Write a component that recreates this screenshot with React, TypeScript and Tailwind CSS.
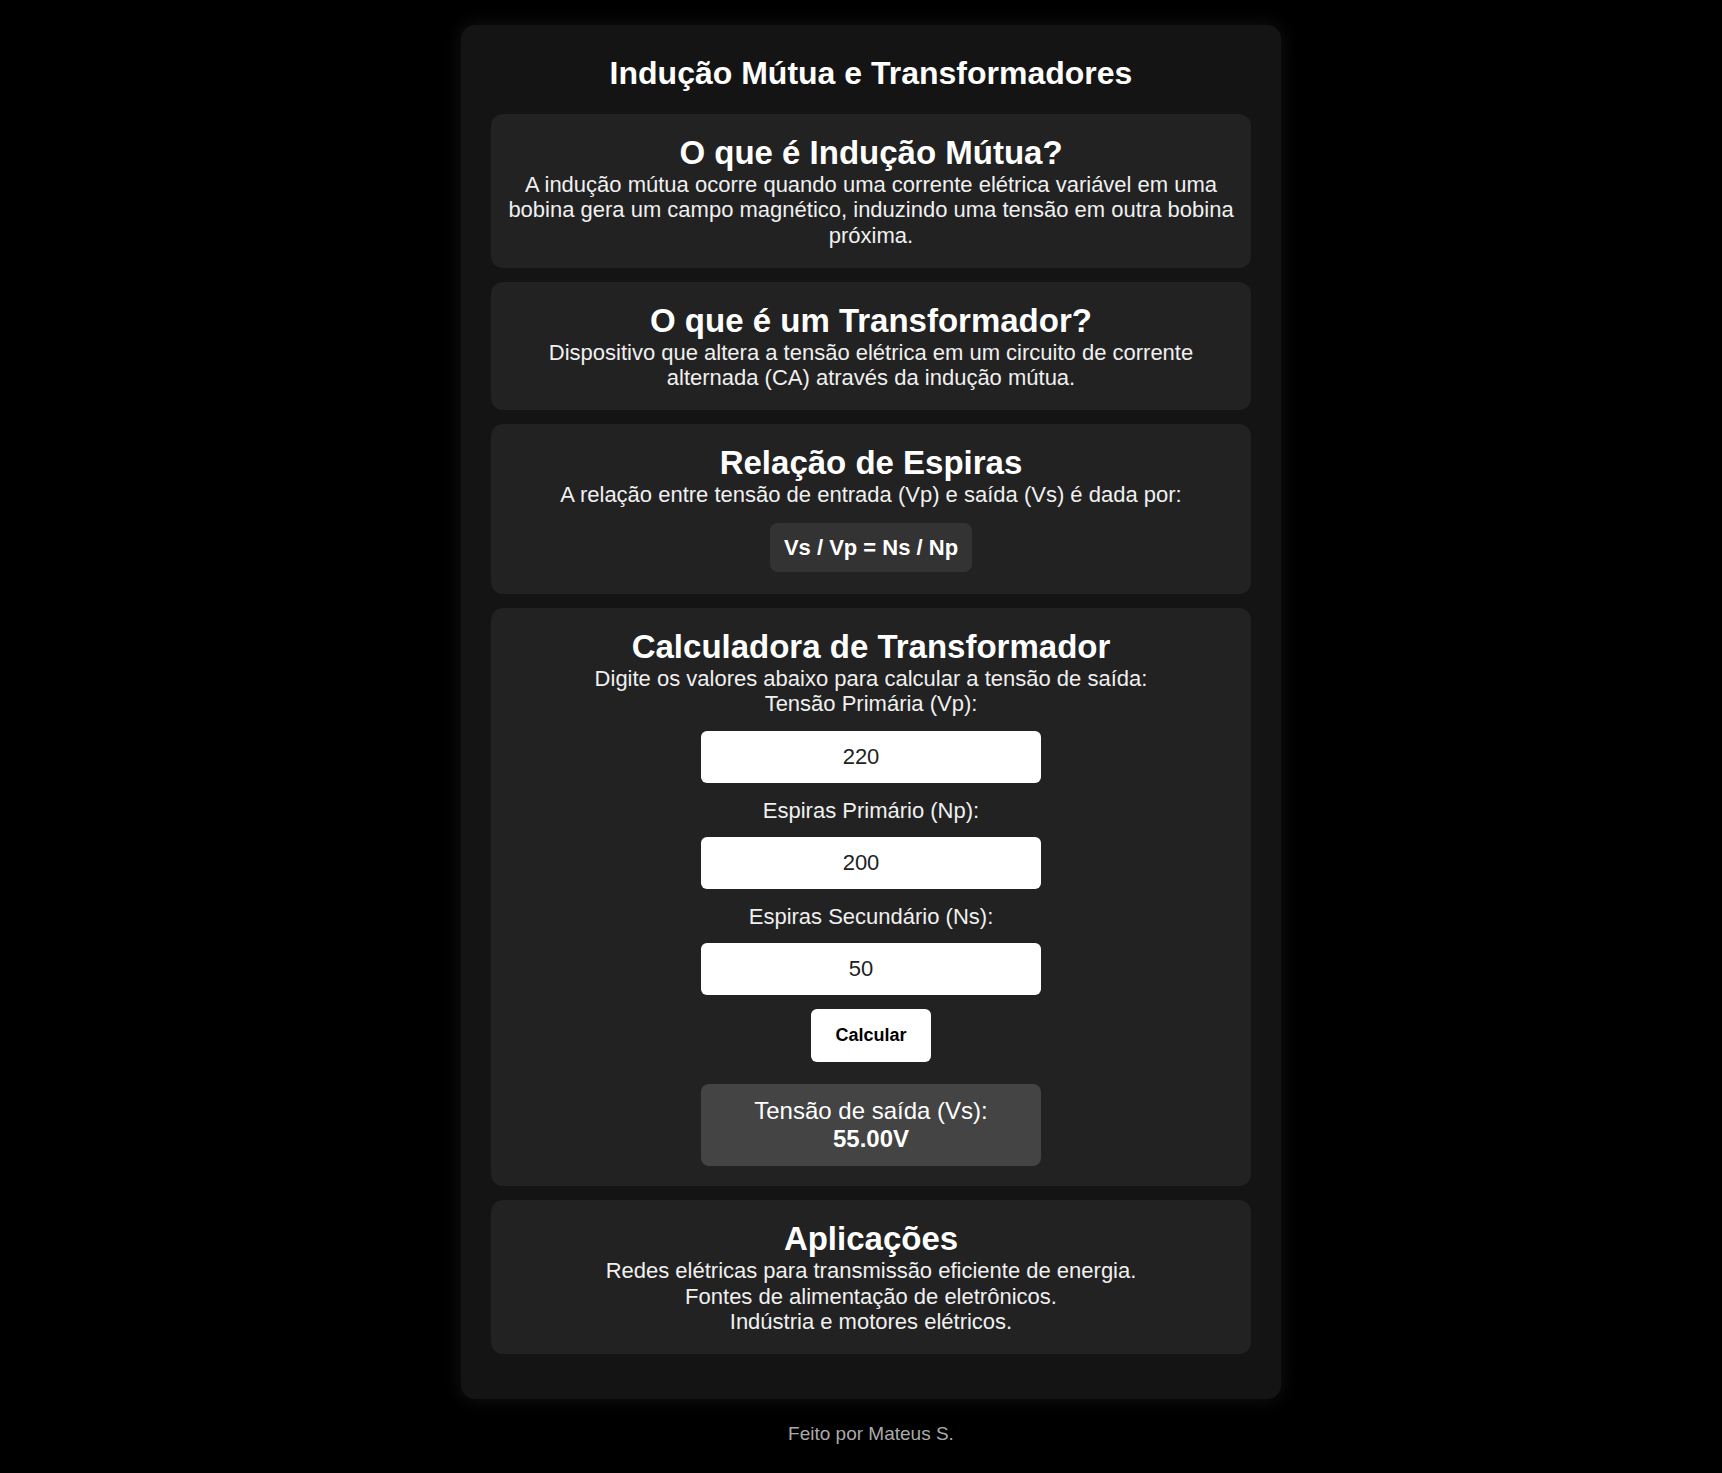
import React from 'react';
import { useState } from "react"

const Card = ({ title, children }: { title: string; children: React.ReactNode }) => {
    return (
        <section className="bg-[#222222] rounded-[12px] px-[16px] py-[20px] mb-[14px]">
            <h2 className="text-[33px] leading-[38px] font-bold text-white">{title}</h2>
            {children}
        </section>
    )
}

const App = () => {
    const [vp, setVp] = useState("220")
    const [np, setNp] = useState("200")
    const [ns, setNs] = useState("50")
    const [vs, setVs] = useState(55)

    const handleCalc = () => {
        const v = parseFloat(vp)
        const p = parseFloat(np)
        const s = parseFloat(ns)
        if (p) setVs((v * s) / p)
    }

    const inputClass =
        "block w-[340px] h-[52px] my-[14px] pr-[5px] rounded-[6px] bg-white text-[#222] text-[22px] text-center outline-none"

    return (
        <div
            className="min-h-screen bg-black pl-[20px] pt-[25px] pb-[20px] text-[#f0f0f0] text-center"
            style={{ fontFamily: '"Liberation Sans", Arial, sans-serif' }}
        >
            <div className="mx-auto w-[820px] rounded-[14px] bg-[#141414] px-[30px] pt-[30px] pb-[31px] shadow-[0_0_20px_rgba(255,255,255,0.08)]">
                <h1 className="text-[32px] leading-[37px] font-bold text-white mb-[22px]">
                    Indução Mútua e Transformadores
                </h1>

                <Card title="O que é Indução Mútua?">
                    <p className="text-[22px] leading-[25.3px]">
                        A indução mútua ocorre quando uma corrente elétrica variável em uma bobina gera um campo magnético, induzindo uma tensão em outra bobina próxima.
                    </p>
                </Card>

                <Card title="O que é um Transformador?">
                    <p className="text-[22px] leading-[25.3px]">
                        Dispositivo que altera a tensão elétrica em um circuito de corrente alternada (CA) através da indução mútua.
                    </p>
                </Card>

                <Card title="Relação de Espiras">
                    <p className="text-[22px] leading-[25.3px]">
                        A relação entre tensão de entrada (Vp) e saída (Vs) é dada por:
                    </p>
                    <div className="inline-block mt-[15px] mb-[2px] bg-[#333333] rounded-[8px] px-[14px] py-[12px] text-[22px] leading-[25.3px] font-bold text-white">
                        Vs / Vp = Ns / Np
                    </div>
                </Card>

                <Card title="Calculadora de Transformador">
                    <p className="text-[22px] leading-[25.3px]">
                        Digite os valores abaixo para calcular a tensão de saída:
                    </p>
                    <div className="flex flex-col items-center">
                        <label className="text-[22px] leading-[25.3px]">Tensão Primária (Vp):</label>
                        <input type="number" value={vp} onChange={e => setVp(e.target.value)} className={inputClass} />
                        <label className="text-[22px] leading-[25.3px] mt-[1px]">Espiras Primário (Np):</label>
                        <input type="number" value={np} onChange={e => setNp(e.target.value)} className={inputClass} />
                        <label className="text-[22px] leading-[25.3px] mt-[1px]">Espiras Secundário (Ns):</label>
                        <input type="number" value={ns} onChange={e => setNs(e.target.value)} className={inputClass} />
                        <button
                            onClick={handleCalc}
                            className="bg-white text-black font-bold text-[18px] leading-[21px] px-[24px] py-[16px] rounded-[6px]"
                        >
                            Calcular
                        </button>
                        <div className="w-[340px] mt-[22px] bg-[#444444] rounded-[8px] py-[13px] text-[24px] leading-[28px] text-white">
                            Tensão de saída (Vs):
                            <br />
                            <strong>{vs.toFixed(2)}V</strong>
                        </div>
                    </div>
                </Card>

                <Card title="Aplicações">
                    <p className="text-[22px] leading-[25.3px]">
                        Redes elétricas para transmissão eficiente de energia.
                        <br />
                        Fontes de alimentação de eletrônicos.
                        <br />
                        Indústria e motores elétricos.
                    </p>
                </Card>
            </div>

            {/* Footer */}
            <footer className="mt-[24px] text-[19px] leading-[22px] text-[#aaaaaa]">
                Feito por Mateus S.
            </footer>
        </div>
    )
}

export default App
